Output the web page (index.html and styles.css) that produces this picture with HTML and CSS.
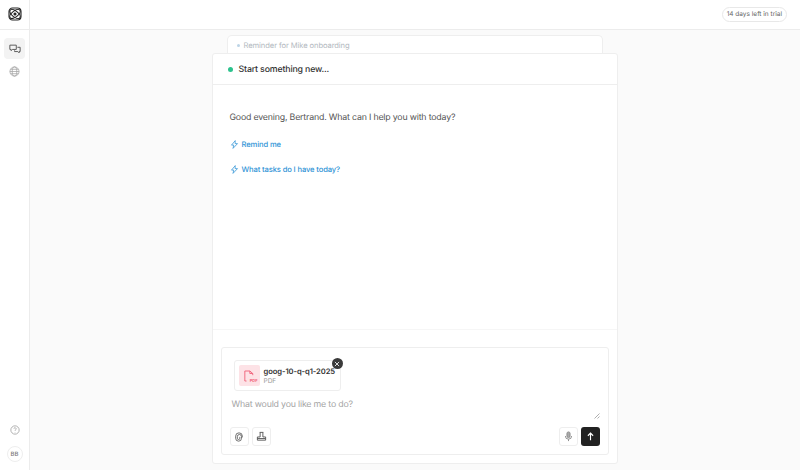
FILE: index.html
```html
<!DOCTYPE html>
<html lang="en">
<head>
<meta charset="utf-8">
<title>Assistant</title>
<link rel="stylesheet" href="styles.css">
</head>
<body>
<div class="app">
  <aside class="rail">
    <div class="logo-cell">
      <svg class="logo" viewBox="0 0 14 14" width="14" height="14" fill="none" stroke="#222" stroke-width="1.100"><rect x="1" y="1" width="12" height="12" rx="3.500"/><ellipse cx="7" cy="7" rx="6.200" ry="3" transform="rotate(38 7 7)"/><ellipse cx="7" cy="7" rx="6.200" ry="3" transform="rotate(-38 7 7)"/><circle cx="7" cy="7" r="1" fill="#222"/></svg>
    </div>
    <nav class="rail-nav">
      <div class="rail-btn active">
        <svg viewBox="0 0 14 14" width="12" height="12" fill="none" stroke="#555" stroke-width="1.100"><path d="M1 2.500h7.500v5H4L2.500 9V7.500H1z"/><path d="M9.800 5h3.200v5h-1.200v1.500L10.300 10H6.500V8.600"/></svg>
      </div>
      <div class="rail-btn">
        <svg viewBox="0 0 12 12" width="11" height="11" fill="none" stroke="#a0a0a0" stroke-width=".8"><circle cx="6" cy="6" r="5"/><ellipse cx="6" cy="6" rx="2.500" ry="5"/><path d="M1 6h10M1.600 3.600h8.800M1.600 8.400h8.800"/></svg>
      </div>
    </nav>
    <div class="rail-foot">
      <svg viewBox="0 0 12 12" width="10" height="10" fill="none" stroke="#999" stroke-width=".9"><circle cx="6" cy="6" r="5"/><path d="M4.600 4.600a1.400 1.400 0 1 1 2.100 1.300c-.5.3-.7.5-.7 1.100M6 8.400v.5"/></svg>
      <div class="avatar">BB</div>
    </div>
  </aside>
  <div class="main">
    <header class="topbar"><span class="trial">14 days left in trial</span></header>
    <div class="stage">
      <div class="stack">
        <div class="peek"><i class="peek-dot"></i>Reminder for Mike onboarding</div>
        <section class="card">
          <div class="card-head"><i class="status-dot"></i><span>Start something new...</span></div>
          <div class="chat">
            <p class="greeting">Good evening, Bertrand. What can I help you with today?</p>
            <a class="prompt">
              <svg viewBox="0 0 12 12" width="9" height="11" fill="none" stroke="#2f93d6" stroke-width="1"><path d="M7 .8 2 6.800h3l-1 4.400 6-6.400H6.800z"/></svg>
              Remind me
            </a>
            <a class="prompt">
              <svg viewBox="0 0 12 12" width="9" height="11" fill="none" stroke="#2f93d6" stroke-width="1"><path d="M7 .8 2 6.800h3l-1 4.400 6-6.400H6.800z"/></svg>
              What tasks do I have today?
            </a>
          </div>
          <div class="composer-wrap">
            <div class="composer">
              <div class="file">
                <div class="file-icon">
                  <svg viewBox="0 0 12 14" width="10" height="12" fill="none" stroke="#f0607a" stroke-width="1.100"><path d="M1 7V1h6l3.500 3v2M7 1v3h3.500"/><path d="M1 7v6h2"/></svg>
                  <span class="pdf-tag">PDF</span>
                </div>
                <div class="file-meta">
                  <div class="file-name">goog-10-q-q1-2025</div>
                  <div class="file-type">PDF</div>
                </div>
                <div class="file-close">
                  <svg viewBox="0 0 8 8" width="6" height="6" fill="none" stroke="#eee" stroke-width="1.200"><path d="M1.200 1.200l5.600 5.600M6.800 1.200 1.200 6.800"/></svg>
                </div>
              </div>
              <div class="placeholder">What would you like me to do?</div>
              <svg class="grip" viewBox="0 0 6 6" width="6" height="6" fill="none" stroke="#999" stroke-width=".8"><path d="M.5 5.500 5.500 .5M3.500 5.500l2-2"/></svg>
              <div class="tools">
                <div class="tool">
                  <svg viewBox="0 0 12 12" width="10" height="10" fill="none" stroke="#555" stroke-width="1"><path d="M10 6.500V5a4 4 0 0 0-8 0v2.500a3.500 3.500 0 0 0 7 0V5.500a2.500 2.500 0 0 0-5 0v2a1.500 1.500 0 0 0 3 0V5.800"/></svg>
                </div>
                <div class="tool">
                  <svg viewBox="0 0 12 12" width="11" height="11" fill="none" stroke="#555" stroke-width="1"><path d="M4 1.500h4M4.500 1.500v5h-3v3.500h9V6.500h-3v-5M1.500 8.200h9"/></svg>
                </div>
                <div class="spacer"></div>
                <div class="tool">
                  <svg viewBox="0 0 12 12" width="11" height="11" fill="none" stroke="#888" stroke-width="1"><rect x="4.300" y="1" width="3.400" height="6.200" rx="1.700" fill="#aaa"/><path d="M2.600 5.500a3.400 3.400 0 0 0 6.800 0M6 9v2"/></svg>
                </div>
                <div class="send">
                  <svg viewBox="0 0 12 12" width="9" height="9" fill="none" stroke="#fff" stroke-width="1.500"><path d="M6 11V1.500M2.500 5 6 1.500 9.500 5"/></svg>
                </div>
              </div>
            </div>
          </div>
        </section>
      </div>
    </div>
  </div>
</div>
</body>
</html>
```
FILE: styles.css
```css
* { box-sizing: border-box; }
html, body { margin: 0; height: 100%; }
body { font-family: Inter, "Liberation Sans", sans-serif; color: #333; background: #fafafa; overflow: hidden; text-rendering: geometricPrecision; }
.app { display: flex; width: 800px; height: 470px; }
.rail { width: 30px; flex: none; background: #fff; border-right: 1px solid #ececec; display: flex; flex-direction: column; align-items: center; }
.logo-cell { height: 30px; width: 100%; display: flex; align-items: center; justify-content: center; border-bottom: 1px solid #ececec; flex: none; padding-bottom: 1px; }
.rail-nav { display: flex; flex-direction: column; align-items: center; gap: 2px; padding-top: 8px; flex: 1; }
.rail-btn { width: 21px; height: 21px; border-radius: 4px; display: flex; align-items: center; justify-content: center; }
.rail-btn.active { background: #f3f3f3; }
.rail-foot { display: flex; flex-direction: column; align-items: center; gap: 11px; padding-bottom: 8px; }
.avatar { width: 16px; height: 16px; border-radius: 50%; border: 1px solid #eee; font-size: 6px; font-weight: 500; color: #777; display: flex; align-items: center; justify-content: center; }
.main { flex: 1; display: flex; flex-direction: column; min-width: 0; }
.topbar { height: 30px; flex: none; background: #fff; border-bottom: 1px solid #ececec; display: flex; align-items: center; justify-content: flex-end; padding: 0 13px 1px 0; }
.trial { font-size: 6.500px; color: #666; border: 1px solid #e8e8e8; border-radius: 8px; height: 15px; padding: 0 4px; display: flex; align-items: center; background: #fff; }
.stage { flex: 1; display: flex; justify-content: center; }
.stack { width: 406px; margin-left: -1px; padding-top: 5px; display: flex; flex-direction: column; height: 434px; }
.peek { margin: 0 15px; height: 18px; background: #fff; border: 1px solid #eee; border-bottom: 0; border-radius: 5px 5px 0 0; font-size: 7.600px; letter-spacing: -.09px; color: #b3b9c0; padding: 4px 0 0 9px; display: flex; align-items: flex-start; gap: 4px; line-height: 11px; flex: none; }
.peek-dot { width: 3px; height: 3px; margin-top: 4px; border-radius: 50%; background: #bcd4e6; flex: none; }
.card { flex: 1; background: #fff; border: 1px solid #eee; border-radius: 3px; display: flex; flex-direction: column; min-height: 0; }
.card-head { height: 31px; flex: none; border-bottom: 1px solid #eee; display: flex; align-items: center; padding-left: 15px; gap: 6px; font-size: 8.800px; letter-spacing: -.17px; font-weight: 500; color: #333; }
.status-dot { width: 5px; height: 5px; border-radius: 50%; background: #2cc28d; flex: none; }
.chat { flex: 1; padding: 26px 17px 0; display: flex; flex-direction: column; align-items: flex-start; border-bottom: 1px solid #f6f6f6; }
.greeting { margin: 0 0 14px; font-size: 8.800px; letter-spacing: -.19px; line-height: 13px; color: #555; }
.prompt { display: flex; align-items: center; gap: 3px; font-size: 7.600px; letter-spacing: -.12px; font-weight: 500; color: #2f93d6; height: 12px; margin-bottom: 13px; }
.composer-wrap { flex: none; padding: 17px 8px 8px; }
.composer { position: relative; height: 108px; border: 1px solid #eee; border-radius: 3px; padding: 12px 12px 0; display: flex; flex-direction: column; }
.file { position: relative; width: 107px; height: 31px; border: 1px solid #eee; border-radius: 3px; display: flex; align-items: center; padding-left: 4px; gap: 4px; flex: none; }
.file-icon { position: relative; width: 21px; height: 21px; border-radius: 2px; background: #fde2e6; display: flex; align-items: center; justify-content: center; flex: none; }
.pdf-tag { position: absolute; right: 2px; bottom: 3px; font-size: 4px; font-weight: 700; color: #f0607a; line-height: 5px; background: #fde2e6; }
.file-meta { padding-top: 1px; }
.file-name { font-size: 7.600px; letter-spacing: -.08px; font-weight: 600; color: #333; line-height: 10px; white-space: nowrap; }
.file-type { font-size: 6.500px; color: #999; line-height: 9px; }
.file-close { position: absolute; top: -3px; right: -3px; width: 11px; height: 11px; border-radius: 50%; background: #3a3a3a; display: flex; align-items: center; justify-content: center; }
.placeholder { margin: 8px 0 0 -2px; font-size: 8.800px; letter-spacing: -.19px; line-height: 12px; color: #a5a5a5; }
.grip { position: absolute; right: 8px; top: 65px; }
.tools { display: flex; align-items: center; gap: 3px; margin-top: auto; margin-bottom: 8px; margin-left: -4px; margin-right: -4px; }
.spacer { flex: 1; }
.tool { width: 19px; height: 19px; border: 1px solid #eee; border-radius: 3px; display: flex; align-items: center; justify-content: center; background: #fff; }
.send { width: 19px; height: 19px; border-radius: 3px; background: #222; display: flex; align-items: center; justify-content: center; }
```
